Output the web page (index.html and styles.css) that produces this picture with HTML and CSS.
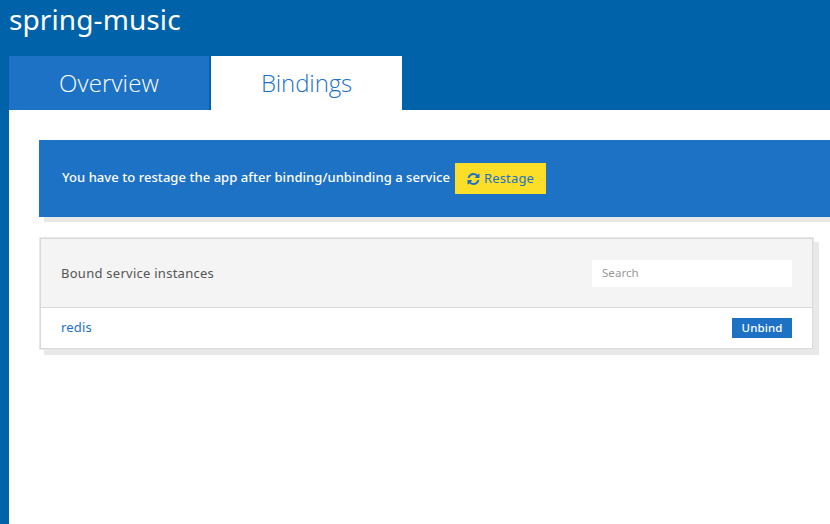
FILE: index.html
```html
<!DOCTYPE html>
<html lang="en">
<head>
<meta charset="utf-8">
<title>spring-music</title>
<link rel="stylesheet" href="styles.css">
</head>
<body>
<h1 class="title"><span>spring-music</span></h1>
<nav class="tabs">
  <a class="tab tab-overview"><span>Overview</span></a>
  <a class="tab tab-active"><span>Bindings</span></a>
</nav>
<main class="content">
  <div class="notice">
    <span class="notice-text">You have to restage the app after binding/unbinding a service</span>
    <button class="restage">
      <svg class="refresh" viewBox="0 0 1536 1536" aria-hidden="true"><path fill="currentColor" d="M1511 928q0 5-1 7-64 268-268 434.500T764 1536q-146 0-282.500-55T238 1324l-129 129q-19 19-45 19t-45-19-19-45V960q0-26 19-45t45-19h448q26 0 45 19t19 45-19 45l-137 137q71 66 161 102t187 36q134 0 250-65t186-179q11-17 53-117 8-23 30-23h192q13 0 22.500 9.500t9.500 22.500zm25-800v448q0 26-19 45t-45 19h-448q-26 0-45-19t-19-45 19-45l138-138Q969 256 768 256q-134 0-250 65T332 500q-11 17-53 117-8 23-30 23H50q-13 0-22.500-9.500T18 608v-7q65-268 270-434.500T768 0q146 0 284 55.500T1297 212l130-129q19-19 45-19t45 19 19 45z"/></svg>
      <span class="restage-text">Restage</span>
    </button>
  </div>
  <section class="panel">
    <header class="panel-header">
      <span class="panel-title">Bound service instances</span>
      <input class="search" type="text" placeholder="Search">
    </header>
    <div class="row">
      <a class="service">redis</a>
      <button class="unbind">Unbind</button>
    </div>
  </section>
</main>
</body>
</html>
```
FILE: styles.css
```css
* { box-sizing: border-box; }
body {
  margin: 0;
  height: 524px;
  padding-left: 9px;
  display: flex;
  flex-direction: column;
  overflow: hidden;
  background: #0062a9;
  font-family: "Noto Sans", "Open Sans", sans-serif;
  font-size: 13px;
  white-space: nowrap;
}
button, input { font-family: inherit; border: 0; border-radius: 0; margin: 0; }
.title {
  margin: 0;
  height: 56px;
  font-size: 28px;
  font-weight: 400;
  letter-spacing: 0.1px;
  line-height: 38px;
  color: #fff;
}
.tabs { display: flex; gap: 2px; height: 54px; }
.tab {
  display: flex;
  justify-content: center;
  width: 200px;
  background: #1d72c6;
  color: #fff;
  font-family: "Open Sans", sans-serif;
  font-weight: 300;
  font-size: 24px;
  line-height: 54px;
}
.tab-overview { letter-spacing: 0.12px; }
.tab-active { width: 191px; background: #fff; color: #1d72c6; letter-spacing: -0.12px; }
.content { flex: 1; padding: 30px 0 0 30px; background: #fff; }
.notice {
  display: flex;
  align-items: center;
  height: 77px;
  padding-left: 23px;
  background: #1d72c6;
  box-shadow: 5px 5px 0 #e8e8e8;
  color: #fff;
}
.notice-text { width: 393px; padding-bottom: 4px; font-weight: 500; font-size: 13px; line-height: 20px; letter-spacing: 0.055px; }
.restage {
  display: flex;
  align-items: center;
  width: 91px;
  height: 31px;
  padding: 0 0 0 12px;
  background: #fcdd28;
  color: #1d72c6;
  font-size: 13px;
}
.restage-text { padding-bottom: 2px; letter-spacing: 0.15px; }
.refresh { width: 13px; height: 12px; margin-right: 4px; }
.panel {
  width: 773px;
  height: 111px;
  margin: 21px 0 0 1px;
  border: 1px solid #d9d9d9;
  background: #fff;
  box-shadow: 0 0 0 1px #e8e8e8, 5px 5px 0 1px #e8e8e8;
}
.panel-header {
  display: flex;
  align-items: center;
  justify-content: space-between;
  height: 69px;
  padding: 0 20px;
  border-bottom: 1px solid #d9d9d9;
  background: #f4f4f4;
  color: #555;
}
.panel-title { letter-spacing: 0.26px; }
.search { width: 200px; height: 27px; padding: 0 10px 2px; background: #fff; font-size: 11.5px; letter-spacing: 0.05px; margin-top: 1px; }
.search::placeholder { color: #999; opacity: 1; }
.row { display: flex; align-items: center; justify-content: space-between; height: 40px; padding: 0 20px; }
.service { color: #1d72c6; padding-bottom: 2px; letter-spacing: 0.2px; }
.unbind { width: 60px; height: 20px; padding: 0 0 2px; background: #1d72c6; color: #fff; font-size: 11.5px; font-weight: 500; letter-spacing: 0.1px; }
```
